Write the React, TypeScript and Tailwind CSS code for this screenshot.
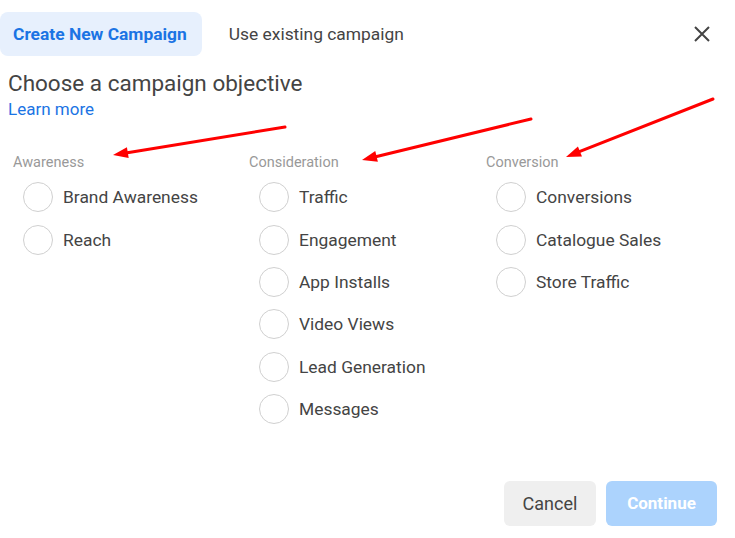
import React from "react";

const columns = [
  { title: "Awareness", items: ["Brand Awareness", "Reach"] },
  {
    title: "Consideration",
    items: ["Traffic", "Engagement", "App Installs", "Video Views", "Lead Generation", "Messages"],
  },
  { title: "Conversion", items: ["Conversions", "Catalogue Sales", "Store Traffic"] },
];

// red annotation arrows: [startX, startY, tipX, tipY]
const arrows: [number, number, number, number][] = [
  [285, 127, 113, 155],
  [531, 119, 362, 160],
  [713, 99, 566, 157],
];

function Arrow({ a }: { a: [number, number, number, number] }) {
  const [x1, y1, x2, y2] = a;
  const len = Math.hypot(x2 - x1, y2 - y1);
  const ux = (x2 - x1) / len;
  const uy = (y2 - y1) / len;
  const headLen = 15;
  const headW = 5.5;
  const bx = x2 - ux * headLen;
  const by = y2 - uy * headLen;
  const pts = `${x2},${y2} ${bx - uy * headW},${by + ux * headW} ${bx + uy * headW},${by - ux * headW}`;
  return (
    <g>
      <line x1={x1} y1={y1} x2={bx + ux * 2} y2={by + uy * 2} stroke="#ff0000" strokeWidth="3" strokeLinecap="round" />
      <polygon points={pts} fill="#ff0000" />
    </g>
  );
}

export default function App() {
  return (
    <div className="relative flex h-[538px] w-[735px] flex-col bg-white font-['Roboto',sans-serif]">
      {/* Tabs */}
      <div className="mt-[12px] flex h-[44px] items-center">
        <div className="flex h-full items-center rounded-lg bg-[#e7f0fd] pl-[13px] pr-[15px] text-[17.4px] font-bold text-[#1b74e4]">
          Create New Campaign
        </div>
        <div className="ml-[27px] text-[17.4px] text-[#444]">Use existing campaign</div>
        <button className="ml-auto mr-[24px] text-[#444]">
          <svg width="18" height="18" viewBox="0 0 18 18" fill="none" stroke="currentColor" strokeWidth="2">
            <path d="M2 2 16 16M16 2 2 16" />
          </svg>
        </button>
      </div>

      <h2 className="mt-[14px] px-[8px] text-[22.5px] leading-[26px] text-[#444]">Choose a campaign objective</h2>
      <a className="mt-[3px] px-[8px] text-[17px] leading-[20px] text-[#1b74e4]">Learn more</a>

      {/* Objectives */}
      <div className="mt-[36px] grid grid-cols-[236px_237px_1fr] pl-[13px]">
        {columns.map((col) => (
          <div key={col.title}>
            <p className="text-[14.5px] leading-[16px] text-[#999]">{col.title}</p>
            <div className="mt-[5px] flex flex-col">
              {col.items.map((item) => (
                <label key={item} className="flex h-[42.4px] items-center gap-[10px] pl-[10px]">
                  <span className="h-[30px] w-[30px] shrink-0 rounded-full border border-[#d0d0d0]" />
                  <span className="text-[17.4px] text-[#444]">{item}</span>
                </label>
              ))}
            </div>
          </div>
        ))}
      </div>

      {/* Footer */}
      <div className="mt-auto flex justify-end gap-[10px] pb-[12px] pr-[18px]">
        <button className="h-[45px] w-[92px] rounded-md bg-[#efefef] text-[18px] text-[#444]">Cancel</button>
        <button className="h-[45px] w-[111px] rounded-md bg-[#acd3fd] text-[17px] font-bold text-white">Continue</button>
      </div>

      <svg className="pointer-events-none absolute inset-0" width="735" height="538">
        {arrows.map((a, i) => (
          <Arrow key={i} a={a} />
        ))}
      </svg>
    </div>
  );
}
